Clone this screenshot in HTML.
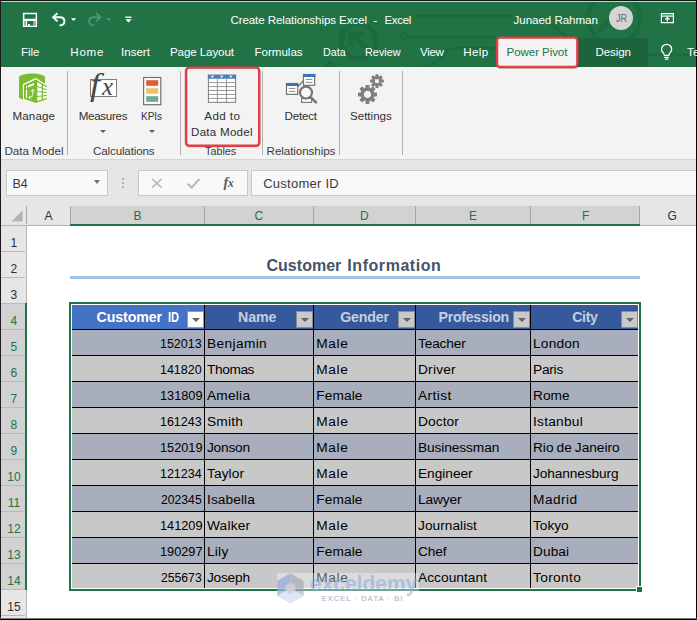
<!DOCTYPE html>
<html lang="en"><head><meta charset="utf-8"><title>Create Relationships Excel - Excel</title>
<style>
html,body{margin:0;padding:0;background:#fff;}
body{width:697px;height:620px;overflow:hidden;font-family:"Liberation Sans",sans-serif;}
#app{position:relative;width:697px;height:620px;overflow:hidden;background:#fff;}
#app div,#app span,#app svg{position:absolute;box-sizing:border-box;}
.t{white-space:pre;font-size:12px;transform-origin:0 0;z-index:5;}
.sep{width:1px;top:71px;height:84px;background:#b2b2b2;}
.hsep{width:1px;top:206px;height:18px;background:#a8a8a8;}
.rsep{left:1px;width:24px;height:1px;background:#b9b9b9;}
.vl{width:1px;top:305px;height:283px;background:#000;}
.hl{left:72px;width:566px;height:1px;background:#000;}
.fb{width:17px;height:17px;top:311px;border:1px solid #8c8c8c;background:#c9c9c9;}
.fb:after{content:"";position:absolute;left:3.6px;top:6px;border-left:4px solid transparent;border-right:4px solid transparent;border-top:4px solid #646464;}
.dd{width:0;height:0;border-left:3px solid transparent;border-right:3px solid transparent;border-top:3px solid #5e5e5e;}

</style></head>
<body>
<div id="app">
<!-- ============ title bar + tabs ============ -->
<div id="titlebar" style="left:0;top:0;width:697px;height:67px;background:#217346;"></div>
<svg id="deco" style="left:0;top:0" width="697" height="67" viewBox="0 0 697 67" fill="none" stroke="#1c6b3f" stroke-width="3">
  <path d="M414 16.5H512"/>
  <circle cx="404" cy="36.7" r="3"/>
  <path d="M407 36.7H496"/>
  <path d="M424 67 L438 61 L448 50.5 Q450 48.5 454 48.5 H496"/>
  <circle cx="358.4" cy="41" r="17.4" stroke-width="5"/>
  <path d="M368.5 49 L351 34 M350.5 46 V33.5 H363" stroke-width="4.5"/>
  <circle cx="330" cy="66" r="3"/>
  <circle cx="614" cy="18" r="26" stroke-width="4.5"/>
  <path d="M598 32 L620 10" stroke-width="5"/>
  <path d="M548 22 L590 55 H697" />
</svg>
<div id="designbg" style="left:578px;top:37.5px;width:70px;height:30px;background:#1d633b;"></div>
<svg id="pptab" style="z-index:3;left:490px;top:32px" width="96" height="42" viewBox="0 0 96 42">
  <rect x="7.6" y="6.1" width="80.2" height="29.4" rx="3" fill="none" stroke="rgba(0,30,0,0.25)" stroke-width="2.6"/>
  <rect x="7.1" y="5.6" width="80.2" height="29.4" rx="3" fill="#f3f3f3" stroke="#e23f46" stroke-width="2.3"/>
</svg>

<!-- quick access toolbar icons -->
<svg id="qat" style="left:0;top:0" width="140" height="36" viewBox="0 0 140 36" fill="none" stroke="#fff" stroke-width="1.5">
  <!-- save -->
  <path fill-rule="evenodd" fill="#fff" stroke="none" d="M22.9 12.8H37.1V27.1H22.9Z M24.4 14.2V18.8H35.6V14.2Z M27.1 20.9V25.8H33.6V20.9Z M24.5 20.9V25.8H25.5V20.9Z M34.5 20.9V25.8H35.5V20.9Z"/>
  <path d="M28.1 24H29.9V25.9H28.1Z" fill="#fff" stroke="none"/>
  <!-- undo -->
  <path d="M53.4 17.3H60.6A4.5 4.1 0 0 1 60.6 25.4H59.4" stroke-width="1.9"/>
  <path d="M57.4 13.2L53.1 17.3L57.4 21.4" stroke-width="1.9"/>
  <path d="M71 18.3H76.2L73.6 21.1Z" fill="#fff" stroke="none"/>
  <!-- redo (disabled) -->
  <g stroke="#4f9370">
  <path d="M100.2 17.3H93A4.5 4.1 0 0 0 93 25.4H94.2" stroke-width="1.9"/>
  <path d="M96.2 13.2L100.5 17.3L96.2 21.4" stroke-width="1.9"/>
  <path d="M106 18.3H111.2L108.6 21.1Z" fill="#4f9370" stroke="none"/>
  </g>
  <!-- customize -->
  <path d="M125.3 17.2H131.6" stroke-width="1.3"/>
  <path d="M125.3 19.3H131.7L128.5 22.6Z" fill="#fff" stroke="none"/>
</svg>

<!-- avatar -->
<div id="avatar" style="left:609px;top:6.3px;width:24px;height:24px;border-radius:12px;background:#d4d4d4;"></div>
<!-- ribbon display options -->
<svg id="rdo" style="left:658px;top:10px" width="20" height="18" viewBox="0 0 20 18" fill="none" stroke="#fff" stroke-width="1.2">
  <path d="M3.4 3.7H15.4V12.6H3.4Z"/><path d="M3.4 6.1H15.4"/>
  <path d="M9.4 11.6V7.6M7.3 9.5L9.4 7.5L11.5 9.5"/>
</svg>
<!-- light bulb -->
<svg id="bulb" style="left:658px;top:42px" width="18" height="20" viewBox="0 0 18 20" fill="none" stroke="#fff" stroke-width="1.3">
  <path d="M6.4 13.4C6.4 11.2 3.5 10 3.5 7.4A5.1 5.1 0 0 1 13.7 7.4C13.7 10 10.8 11.2 10.8 13.4Z"/>
  <path d="M6.3 15.3H10.9M6.9 17.2H10.3"/>
</svg>

<!-- ============ ribbon ============ -->
<div id="ribbon" style="left:0;top:67px;width:697px;height:93px;background:#f3f3f3;border-bottom:1px solid #d4d4d4;"></div>
<div class="sep" style="left:67px"></div>
<div class="sep" style="left:180px"></div>
<div class="sep" style="left:262px"></div>
<div class="sep" style="left:339px"></div>
<div class="sep" style="left:402px"></div>
<svg id="addbox" style="z-index:6;left:180px;top:62px" width="90" height="92" viewBox="0 0 90 92" fill="none">
  <rect x="6.4" y="6" width="73.2" height="78.2" rx="3.2" stroke="rgba(60,0,0,0.16)" stroke-width="2.6"/>
  <rect x="6" y="5.6" width="73.2" height="78.2" rx="3.2" stroke="#e23f46" stroke-width="2.4"/>
</svg>
<div class="dd" style="left:100.4px;top:130px"></div>
<div class="dd" style="left:148.6px;top:130px"></div>

<!-- Manage icon -->
<svg id="ic-manage" style="left:10px;top:68px" width="50" height="40" viewBox="0 0 50 40">
  <path d="M9 9.3A13 3.7 0 0 1 35 9.3V30L12.9 31.8 9 29.8Z" fill="#7dbb30"/>
  <path d="M25.8 10L37.1 16.9V31.6L25.8 35.7 12.9 31.9V16.1Z" fill="#fff"/>
  <path d="M14 16.9L25.8 11.5 36.9 18V31.2L25.8 35 14 31.1Z" fill="#7dbb30"/>
  <path d="M27.3 14.0 L31.7 16.5 L31.7 19.4 L27.3 17.9Z M27.3 19.0 L31.7 20.5 L31.7 23.4 L27.3 22.9Z M27.3 24.0 L31.7 24.5 L31.7 27.4 L27.3 27.9Z M27.3 29.0 L31.7 28.5 L31.7 31.4 L27.3 32.9Z M33.0 17.3 L36.9 19.5 L36.9 21.2 L33.0 19.9Z M33.0 21.0 L36.9 22.3 L36.9 24.0 L33.0 23.6Z M33.0 24.7 L36.9 25.1 L36.9 26.9 L33.0 27.3Z M33.0 28.4 L36.9 28.0 L36.9 29.7 L33.0 31.0Z" fill="#fff"/>
  <path d="M18.2 17.3L24 14.9V17L18.2 19.4Z" fill="#fff"/>
  <path d="M16.5 18V20.2M16.5 21.8V30" stroke="#fff" stroke-width="1.2"/>
  <path d="M22.8 21.6V26.4Q22.8 29.4 19 29.6M20.9 23.6L22.8 21.4 24.7 23.6M20.4 28.2L18.6 29.6 20.4 31" stroke="#fff" stroke-width="0.9" fill="none"/>
</svg>

<!-- Measures fx icon -->
<div id="ic-fxbox" style="left:90px;top:79px;width:27.4px;height:18px;border:1px solid #7d7d7d;background:#fff;"></div>

<!-- KPI icon -->
<svg id="ic-kpi" style="left:141px;top:75px" width="24" height="32" viewBox="0 0 24 32">
  <rect x="2.6" y="2.5" width="17.2" height="27.2" fill="#fdfdfd" stroke="#727272" stroke-width="1.2"/>
  <rect x="5.2" y="5.2" width="12" height="5.6" fill="#d9603b"/>
  <rect x="5.2" y="13.2" width="12" height="5.6" fill="#edc164"/>
  <rect x="5.2" y="21.2" width="12" height="5.6" fill="#6fa895"/>
</svg>

<!-- Add to Data Model table icon -->
<svg id="ic-table" style="left:206px;top:73px" width="32" height="32" viewBox="0 0 32 32">
  <rect x="2.4" y="2.2" width="27.2" height="27.1" fill="#fff" stroke="#7c7c7c" stroke-width="1"/>
  <rect x="1.9" y="1.7" width="28.2" height="4" fill="#467dba"/>
  <path d="M11.4 5.7V29.3M20.5 5.7V29.3M2.4 9.6H29.6M2.4 13.55H29.6M2.4 17.5H29.6M2.4 21.45H29.6M2.4 25.4H29.6" stroke="#8c8c8c" stroke-width="0.9" fill="none"/>
  <path d="M4.6 2.7H8.4L6.5 4.8ZM13.8 2.7H17.6L15.7 4.8ZM22.9 2.7H26.7L24.8 4.8Z" fill="#fff"/>
</svg>

<!-- Detect icon -->
<svg id="ic-detect" style="left:284px;top:72px" width="36" height="34" viewBox="0 0 36 34" fill="none">
  <path d="M14 14.5L20 8" stroke="#757575" stroke-width="1.2"/>
  <rect x="2.5" y="11.5" width="11.2" height="10.8" fill="#fff" stroke="#757575" stroke-width="1.2"/>
  <rect x="1.9" y="11" width="12.4" height="3" fill="#3d76b6"/>
  <path d="M4.8 16.4H11.4M4.8 19.4H11.4" stroke="#8a8a8a" stroke-width="1"/>
  <rect x="19.5" y="2.5" width="11.2" height="10.8" fill="#fff" stroke="#757575" stroke-width="1.2"/>
  <rect x="18.9" y="2" width="12.4" height="3" fill="#3d76b6"/>
  <path d="M21.8 7.4H28.4M21.8 10.4H28.4" stroke="#8a8a8a" stroke-width="1"/>
  <rect x="17.6" y="26.4" width="10" height="4" fill="#fff" stroke="#757575" stroke-width="1.1"/>
  <circle cx="22" cy="20.6" r="6" fill="#f8f8f8" stroke="#767676" stroke-width="2.2"/>
  <path d="M26.6 25.2L32 30.4" stroke="#767676" stroke-width="2.6" stroke-linecap="round"/>
</svg>

<!-- Settings gears -->
<svg id="ic-gear" style="left:352px;top:70px" width="36" height="36" viewBox="0 0 36 36" fill="#7f7f7f">
  <g transform="translate(15.5,24.4)">
    <circle r="5.3" fill="none" stroke="#7f7f7f" stroke-width="3.4"/>
    <g id="teeth1"><rect x="-2" y="-9.5" width="4" height="3.6" rx="0.7"/><rect x="-2" y="5.9" width="4" height="3.6" rx="0.7"/></g>
    <use href="#teeth1" transform="rotate(45)"/><use href="#teeth1" transform="rotate(90)"/><use href="#teeth1" transform="rotate(135)"/>
  </g>
  <g transform="translate(25,11.1)">
    <path fill-rule="evenodd" d="M-5 0A5 5 0 1 0 5 0A5 5 0 1 0 -5 0Z M-1.9 -1.9H1.9V1.9H-1.9Z"/>
    <g id="teeth2"><rect x="-1.5" y="-6.9" width="3" height="2.6" rx="0.5"/><rect x="-1.5" y="4.3" width="3" height="2.6" rx="0.5"/></g>
    <use href="#teeth2" transform="rotate(45)"/><use href="#teeth2" transform="rotate(90)"/><use href="#teeth2" transform="rotate(135)"/>
  </g>
</svg>

<!-- ============ formula bar ============ -->
<div id="fbar" style="left:0;top:160px;width:697px;height:46px;background:#e6e6e6;"></div>
<div id="namebox" style="left:6px;top:170px;width:102px;height:26px;background:#f9f9f9;border:1px solid #c8c8c8;"></div>
<div class="dd" style="left:94px;top:180.2px;border-left-width:3.5px;border-right-width:3.5px;border-top-width:4px;border-top-color:#707070"></div>
<svg style="left:121px;top:176px" width="5" height="14" viewBox="0 0 5 14" fill="#a2a2a2"><rect x="1.2" y="1.8" width="1.8" height="1.8"/><rect x="1.2" y="6.1" width="1.8" height="1.8"/><rect x="1.2" y="10.4" width="1.8" height="1.8"/></svg>
<div id="fbtns" style="left:138px;top:170px;width:110px;height:26px;background:#f9f9f9;border:1px solid #c8c8c8;"></div>
<svg style="left:150px;top:176px" width="90" height="14" viewBox="0 0 90 14" fill="none" stroke="#b9b9b9" stroke-width="1.3">
  <path d="M2 2.8L11.6 11.6M11.6 2.8L2 11.6" stroke-width="1.6"/>
  <path d="M37.6 7.8L41.6 11.6L49.4 3" stroke-width="2.1"/>
</svg>
<span class="t" style="left:223.5px;top:174.6px;font-size:14.5px;line-height:15px;font-family:'Liberation Serif',serif;font-style:italic;font-weight:700;color:#5c5c5c;letter-spacing:-0.3px;">f<span style="position:static;font-size:11.5px;">x</span></span>
<div id="finput" style="left:251px;top:170px;width:450px;height:26px;background:#f9f9f9;border:1px solid #c8c8c8;"></div>

<!-- ============ sheet headers ============ -->
<div id="colhdr" style="left:0;top:206px;width:697px;height:20px;background:#e6e6e6;border-bottom:1px solid #b4b4b4;"></div>
<div id="colsel" style="left:70px;top:206px;width:569.6px;height:20px;background:#d2d2d2;border-bottom:2px solid #217346;"></div>
<div class="hsep" style="left:26px"></div><div class="hsep" style="left:70px"></div><div class="hsep" style="left:204px"></div>
<div class="hsep" style="left:313px"></div><div class="hsep" style="left:415px"></div><div class="hsep" style="left:530px"></div><div class="hsep" style="left:639.4px"></div>
<svg style="left:10px;top:209px" width="14" height="14" viewBox="0 0 14 14"><path d="M12.6 1.2V12.6H1.4Z" fill="#b4b4b4"/></svg>

<div id="rowhdr" style="left:0;top:226px;width:27px;height:394px;background:#e6e6e6;border-right:1px solid #b4b4b4;"></div>
<div id="rowsel" style="left:0;top:303px;width:27px;height:287px;background:#d2d2d2;border-right:2px solid #217346;"></div>
<div class="rsep" style="top:251px"></div><div class="rsep" style="top:277px"></div><div class="rsep" style="top:303px"></div><div class="rsep" style="top:329px"></div><div class="rsep" style="top:355px"></div><div class="rsep" style="top:381px"></div><div class="rsep" style="top:407px"></div><div class="rsep" style="top:433px"></div><div class="rsep" style="top:459px"></div><div class="rsep" style="top:485px"></div><div class="rsep" style="top:511px"></div><div class="rsep" style="top:537px"></div><div class="rsep" style="top:563px"></div><div class="rsep" style="top:589px"></div><div class="rsep" style="top:615px"></div>

<!-- ============ sheet content ============ -->
<div id="uline" style="left:70px;top:276px;width:570px;height:2.5px;background:#9dc3e6;"></div>
<div id="selbox" style="left:69px;top:302px;width:572px;height:289px;border:2px solid #217346;"></div>
<div id="hdrB" style="left:72px;top:305px;width:132px;height:24px;background:#4472c4;"></div>
<div id="hdrR" style="left:205px;top:305px;width:433px;height:24px;background:#35599b;"></div>
<div style="left:72px;top:330px;width:566px;height:25px;background:#a8aebc;"></div><div style="left:72px;top:356px;width:566px;height:25px;background:#c8c8c8;"></div><div style="left:72px;top:382px;width:566px;height:25px;background:#a8aebc;"></div><div style="left:72px;top:408px;width:566px;height:25px;background:#c8c8c8;"></div><div style="left:72px;top:434px;width:566px;height:25px;background:#a8aebc;"></div><div style="left:72px;top:460px;width:566px;height:25px;background:#c8c8c8;"></div><div style="left:72px;top:486px;width:566px;height:25px;background:#a8aebc;"></div><div style="left:72px;top:512px;width:566px;height:25px;background:#c8c8c8;"></div><div style="left:72px;top:538px;width:566px;height:25px;background:#a8aebc;"></div><div style="left:72px;top:564px;width:566px;height:24px;background:#c8c8c8;"></div>
<div class="hl" style="top:329px"></div>
<div class="hl" style="top:355px"></div><div class="hl" style="top:381px"></div><div class="hl" style="top:407px"></div><div class="hl" style="top:433px"></div><div class="hl" style="top:459px"></div><div class="hl" style="top:485px"></div><div class="hl" style="top:511px"></div><div class="hl" style="top:537px"></div><div class="hl" style="top:563px"></div>
<div class="vl" style="left:204px"></div><div class="vl" style="left:313px"></div><div class="vl" style="left:415px"></div><div class="vl" style="left:530px"></div>
<div class="fb" style="left:187px;background:#fbfbfb;border-color:#9a9a9a"></div>
<div class="fb" style="left:296px"></div><div class="fb" style="left:398px"></div><div class="fb" style="left:513px"></div><div class="fb" style="left:621px"></div>
<div id="fillh" style="left:636px;top:586px;width:7px;height:7px;background:#217346;border:1px solid #fff;"></div>

<!-- watermark logo -->
<div id="wmbg" style="z-index:6;left:277px;top:573px;width:142px;height:31px;background:rgba(255,255,255,0.34);"></div>
<svg id="wm" style="z-index:7;left:270px;top:566px" width="44" height="44" viewBox="270 566 44 44">
  <path d="M277.2 581L290.4 573.2V588.4L277.2 596Z" fill="rgba(132,160,222,0.62)"/>
  <path d="M290.4 573.2L303.6 581V596L290.4 588.4Z" fill="rgba(150,156,168,0.55)"/>
  <path d="M277.2 596L290.4 588.4 303.6 596 290.4 603.6Z" fill="rgba(214,224,242,0.8)"/>
  <path d="M290.4 582.6L295.4 585.5V591.3L290.4 594.2 285.4 591.3V585.5Z" fill="rgba(205,208,216,0.85)"/>
</svg>

<!-- ============ window borders ============ -->
<div id="bl" style="left:0;top:0;width:1.2px;height:620px;background:#1c1c1c;"></div>
<div id="bt2" style="left:1px;top:1px;width:695px;height:1px;background:#c9d3cd;"></div>
<div id="bt" style="left:0;top:0;width:697px;height:1px;background:#111;"></div>
<div id="br" style="left:696px;top:0;width:1px;height:620px;background:#000;"></div>
<div id="bb" style="left:0;top:618px;width:697px;height:2px;background:#000;border-top:1px solid #777;"></div>

<span class="t" style="left:230.40px;top:14.00px;font-size:11.6px;line-height:11.6px;color:#fff;letter-spacing:-0.105px;">Create Relationships Excel</span>
<span class="t" style="left:373.30px;top:14.00px;font-size:11.6px;line-height:11.6px;color:#fff;transform:scaleX(1.1250);">-</span>
<span class="t" style="left:384.50px;top:14.00px;font-size:11.6px;line-height:11.6px;color:#fff;letter-spacing:-0.394px;">Excel</span>
<span class="t" style="left:513.50px;top:14.00px;font-size:11.6px;line-height:11.6px;color:#fff;letter-spacing:-0.053px;">Junaed Rahman</span>
<span class="t" style="left:615.80px;top:14.00px;font-size:10px;line-height:10px;color:#666;transform:scaleX(0.9000);">JR</span>
<span class="t" style="left:21.00px;top:46.00px;font-size:11.6px;line-height:11.6px;color:#fff;letter-spacing:-0.078px;">File</span>
<span class="t" style="left:70.30px;top:46.00px;font-size:11.6px;line-height:11.6px;color:#fff;letter-spacing:0.741px;">Home</span>
<span class="t" style="left:121.00px;top:46.00px;font-size:11.6px;line-height:11.6px;color:#fff;letter-spacing:-0.015px;">Insert</span>
<span class="t" style="left:170.00px;top:46.00px;font-size:11.6px;line-height:11.6px;color:#fff;letter-spacing:-0.109px;">Page Layout</span>
<span class="t" style="left:254.50px;top:46.00px;font-size:11.6px;line-height:11.6px;color:#fff;letter-spacing:-0.031px;">Formulas</span>
<span class="t" style="left:322.60px;top:46.00px;font-size:11.6px;line-height:11.6px;color:#fff;transform:scaleX(0.9225);">Data</span>
<span class="t" style="left:365.40px;top:46.00px;font-size:11.6px;line-height:11.6px;color:#fff;transform:scaleX(0.9368);">Review</span>
<span class="t" style="left:420.00px;top:46.00px;font-size:11.6px;line-height:11.6px;color:#fff;letter-spacing:-0.316px;">View</span>
<span class="t" style="left:463.30px;top:46.00px;font-size:11.6px;line-height:11.6px;color:#fff;letter-spacing:0.368px;">Help</span>
<span class="t" style="left:506.50px;top:46.00px;font-size:11.6px;line-height:11.6px;color:#217346;letter-spacing:-0.094px;">Power Pivot</span>
<span class="t" style="left:595.40px;top:46.00px;font-size:11.6px;line-height:11.6px;color:#fff;letter-spacing:-0.108px;">Design</span>
<span class="t" style="left:687.00px;top:46.00px;font-size:11.6px;line-height:11.6px;color:#fff;letter-spacing:0.288px;">Tell me</span>
<span class="t" style="left:12.40px;top:110.00px;font-size:11.6px;line-height:11.6px;color:#303030;letter-spacing:0.150px;">Manage</span>
<span class="t" style="left:78.70px;top:110.00px;font-size:11.6px;line-height:11.6px;color:#303030;letter-spacing:-0.301px;">Measures</span>
<span class="t" style="left:141.40px;top:110.00px;font-size:11.6px;line-height:11.6px;color:#303030;transform:scaleX(0.8628);">KPIs</span>
<span class="t" style="left:204.30px;top:110.00px;font-size:11.6px;line-height:11.6px;color:#303030;letter-spacing:0.406px;">Add to</span>
<span class="t" style="left:191.00px;top:126.00px;font-size:11.6px;line-height:11.6px;color:#303030;letter-spacing:0.254px;">Data Model</span>
<span class="t" style="left:284.50px;top:110.00px;font-size:11.6px;line-height:11.6px;color:#303030;letter-spacing:-0.197px;">Detect</span>
<span class="t" style="left:350.00px;top:110.00px;font-size:11.6px;line-height:11.6px;color:#303030;letter-spacing:-0.014px;">Settings</span>
<span class="t" style="left:4.40px;top:145.00px;font-size:11.6px;line-height:11.6px;color:#3a3a3a;letter-spacing:-0.012px;">Data Model</span>
<span class="t" style="left:93.00px;top:145.00px;font-size:11.6px;line-height:11.6px;color:#3a3a3a;letter-spacing:-0.142px;">Calculations</span>
<span class="t" style="left:205.00px;top:145.00px;font-size:11.6px;line-height:11.6px;color:#3a3a3a;transform:scaleX(0.9313);">Tables</span>
<span class="t" style="left:266.60px;top:145.00px;font-size:11.6px;line-height:11.6px;color:#3a3a3a;letter-spacing:-0.075px;">Relationships</span>
<span class="t" style="left:90.00px;top:69.00px;font-size:31px;line-height:31px;color:#484848;transform:scaleX(1.1615);font-family:'Liberation Serif', serif;font-style:italic;">f</span>
<span class="t" style="left:101.55px;top:74.00px;font-size:26px;line-height:26px;color:#484848;transform:scaleX(0.9538);font-family:'Liberation Serif', serif;font-style:italic;">x</span>
<span class="t" style="left:12.60px;top:178.00px;font-size:12.5px;line-height:12.5px;color:#3a3a3a;letter-spacing:-0.237px;">B4</span>
<span class="t" style="left:263.20px;top:177.00px;font-size:13px;line-height:13px;color:#3a3a3a;letter-spacing:0.253px;">Customer ID</span>
<span class="t" style="left:44.50px;top:210.00px;font-size:12px;line-height:12px;color:#303030;">A</span>
<span class="t" style="left:133.50px;top:210.00px;font-size:12px;line-height:12px;color:#217346;">B</span>
<span class="t" style="left:254.50px;top:210.00px;font-size:12px;line-height:12px;color:#217346;">C</span>
<span class="t" style="left:360.00px;top:210.00px;font-size:12px;line-height:12px;color:#217346;">D</span>
<span class="t" style="left:469.00px;top:210.00px;font-size:12px;line-height:12px;color:#217346;">E</span>
<span class="t" style="left:582.00px;top:210.00px;font-size:12px;line-height:12px;color:#217346;">F</span>
<span class="t" style="left:667.50px;top:210.00px;font-size:12px;line-height:12px;color:#303030;">G</span>
<span class="t" style="left:10.60px;top:237.00px;font-size:12px;line-height:12px;color:#303030;">1</span>
<span class="t" style="left:10.60px;top:263.00px;font-size:12px;line-height:12px;color:#303030;">2</span>
<span class="t" style="left:10.60px;top:289.00px;font-size:12px;line-height:12px;color:#303030;">3</span>
<span class="t" style="left:10.60px;top:315.00px;font-size:12px;line-height:12px;color:#217346;">4</span>
<span class="t" style="left:10.60px;top:341.00px;font-size:12px;line-height:12px;color:#217346;">5</span>
<span class="t" style="left:10.60px;top:367.00px;font-size:12px;line-height:12px;color:#217346;">6</span>
<span class="t" style="left:10.60px;top:393.00px;font-size:12px;line-height:12px;color:#217346;">7</span>
<span class="t" style="left:10.60px;top:419.00px;font-size:12px;line-height:12px;color:#217346;">8</span>
<span class="t" style="left:10.60px;top:445.00px;font-size:12px;line-height:12px;color:#217346;">9</span>
<span class="t" style="left:7.26px;top:471.00px;font-size:12px;line-height:12px;color:#217346;">10</span>
<span class="t" style="left:7.71px;top:497.00px;font-size:12px;line-height:12px;color:#217346;">11</span>
<span class="t" style="left:7.26px;top:523.00px;font-size:12px;line-height:12px;color:#217346;">12</span>
<span class="t" style="left:7.26px;top:549.00px;font-size:12px;line-height:12px;color:#217346;">13</span>
<span class="t" style="left:7.26px;top:575.00px;font-size:12px;line-height:12px;color:#217346;">14</span>
<span class="t" style="left:7.26px;top:601.00px;font-size:12px;line-height:12px;color:#303030;">15</span>
<span class="t" style="left:266.50px;top:258.00px;font-size:16px;line-height:16px;color:#44546a;letter-spacing:0.021px;font-weight:700;">Customer</span>
<span class="t" style="left:347.30px;top:258.00px;font-size:16px;line-height:16px;color:#44546a;letter-spacing:0.558px;font-weight:700;">Information</span>
<span class="t" style="left:96.50px;top:310.00px;font-size:14.2px;line-height:14.2px;color:#fff;letter-spacing:-0.100px;font-weight:700;">Customer</span>
<span class="t" style="left:167.80px;top:310.00px;font-size:14.2px;line-height:14.2px;color:#fff;transform:scaleX(0.7747);font-weight:700;">ID</span>
<span class="t" style="left:238.00px;top:310.00px;font-size:14.2px;line-height:14.2px;color:#c6cee0;letter-spacing:-0.050px;font-weight:700;">Name</span>
<span class="t" style="left:340.20px;top:310.00px;font-size:14.2px;line-height:14.2px;color:#c6cee0;letter-spacing:-0.170px;font-weight:700;">Gender</span>
<span class="t" style="left:438.60px;top:310.00px;font-size:14.2px;line-height:14.2px;color:#c6cee0;letter-spacing:-0.306px;font-weight:700;">Profession</span>
<span class="t" style="left:572.20px;top:310.00px;font-size:14.2px;line-height:14.2px;color:#c6cee0;letter-spacing:-0.371px;font-weight:700;">City</span>
<span class="t" style="left:160.09px;top:337.00px;font-size:13.7px;line-height:13.7px;color:#000;transform:scaleX(0.9099);">152013</span>
<span class="t" style="left:207.00px;top:337.00px;font-size:13.7px;line-height:13.7px;color:#000;letter-spacing:0.379px;word-spacing:-0.7px;">Benjamin</span>
<span class="t" style="left:316.30px;top:337.00px;font-size:13.7px;line-height:13.7px;color:#000;letter-spacing:0.648px;word-spacing:-0.7px;">Male</span>
<span class="t" style="left:418.00px;top:337.00px;font-size:13.7px;line-height:13.7px;color:#000;letter-spacing:-0.156px;word-spacing:-0.7px;">Teacher</span>
<span class="t" style="left:533.00px;top:337.00px;font-size:13.7px;line-height:13.7px;color:#000;letter-spacing:0.208px;word-spacing:-0.7px;">London</span>
<span class="t" style="left:160.09px;top:363.00px;font-size:13.7px;line-height:13.7px;color:#000;transform:scaleX(0.9099);">141820</span>
<span class="t" style="left:207.00px;top:363.00px;font-size:13.7px;line-height:13.7px;color:#000;letter-spacing:-0.400px;word-spacing:-0.7px;">Thomas</span>
<span class="t" style="left:316.30px;top:363.00px;font-size:13.7px;line-height:13.7px;color:#000;letter-spacing:0.648px;word-spacing:-0.7px;">Male</span>
<span class="t" style="left:418.00px;top:363.00px;font-size:13.7px;line-height:13.7px;color:#000;letter-spacing:0.232px;word-spacing:-0.7px;">Driver</span>
<span class="t" style="left:533.00px;top:363.00px;font-size:13.7px;line-height:13.7px;color:#000;letter-spacing:-0.235px;word-spacing:-0.7px;">Paris</span>
<span class="t" style="left:160.07px;top:389.00px;font-size:13.7px;line-height:13.7px;color:#000;transform:scaleX(0.9305);">131809</span>
<span class="t" style="left:207.00px;top:389.00px;font-size:13.7px;line-height:13.7px;color:#000;letter-spacing:0.235px;word-spacing:-0.7px;">Amelia</span>
<span class="t" style="left:316.30px;top:389.00px;font-size:13.7px;line-height:13.7px;color:#000;letter-spacing:0.094px;word-spacing:-0.7px;">Female</span>
<span class="t" style="left:418.00px;top:389.00px;font-size:13.7px;line-height:13.7px;color:#000;letter-spacing:0.445px;word-spacing:-0.7px;">Artist</span>
<span class="t" style="left:533.00px;top:389.00px;font-size:13.7px;line-height:13.7px;color:#000;letter-spacing:0.034px;word-spacing:-0.7px;">Rome</span>
<span class="t" style="left:160.09px;top:415.00px;font-size:13.7px;line-height:13.7px;color:#000;transform:scaleX(0.9099);">161243</span>
<span class="t" style="left:207.00px;top:415.00px;font-size:13.7px;line-height:13.7px;color:#000;letter-spacing:0.206px;word-spacing:-0.7px;">Smith</span>
<span class="t" style="left:316.30px;top:415.00px;font-size:13.7px;line-height:13.7px;color:#000;letter-spacing:0.648px;word-spacing:-0.7px;">Male</span>
<span class="t" style="left:418.00px;top:415.00px;font-size:13.7px;line-height:13.7px;color:#000;letter-spacing:0.109px;word-spacing:-0.7px;">Doctor</span>
<span class="t" style="left:533.00px;top:415.00px;font-size:13.7px;line-height:13.7px;color:#000;letter-spacing:0.257px;word-spacing:-0.7px;">Istanbul</span>
<span class="t" style="left:160.07px;top:441.00px;font-size:13.7px;line-height:13.7px;color:#000;transform:scaleX(0.9305);">152019</span>
<span class="t" style="left:207.00px;top:441.00px;font-size:13.7px;line-height:13.7px;color:#000;letter-spacing:-0.225px;word-spacing:-0.7px;">Jonson</span>
<span class="t" style="left:316.30px;top:441.00px;font-size:13.7px;line-height:13.7px;color:#000;letter-spacing:0.648px;word-spacing:-0.7px;">Male</span>
<span class="t" style="left:418.00px;top:441.00px;font-size:13.7px;line-height:13.7px;color:#000;letter-spacing:-0.085px;word-spacing:-0.7px;">Businessman</span>
<span class="t" style="left:533.00px;top:441.00px;font-size:13.7px;line-height:13.7px;color:#000;letter-spacing:-0.019px;word-spacing:-0.7px;">Rio de Janeiro</span>
<span class="t" style="left:160.09px;top:467.00px;font-size:13.7px;line-height:13.7px;color:#000;transform:scaleX(0.9099);">121234</span>
<span class="t" style="left:207.00px;top:467.00px;font-size:13.7px;line-height:13.7px;color:#000;letter-spacing:0.090px;word-spacing:-0.7px;">Taylor</span>
<span class="t" style="left:316.30px;top:467.00px;font-size:13.7px;line-height:13.7px;color:#000;letter-spacing:0.648px;word-spacing:-0.7px;">Male</span>
<span class="t" style="left:418.00px;top:467.00px;font-size:13.7px;line-height:13.7px;color:#000;letter-spacing:-0.019px;word-spacing:-0.7px;">Engineer</span>
<span class="t" style="left:533.00px;top:467.00px;font-size:13.7px;line-height:13.7px;color:#000;letter-spacing:-0.104px;word-spacing:-0.7px;">Johannesburg</span>
<span class="t" style="left:161.00px;top:493.00px;font-size:13.7px;line-height:13.7px;color:#000;transform:scaleX(0.8901);">202345</span>
<span class="t" style="left:207.00px;top:493.00px;font-size:13.7px;line-height:13.7px;color:#000;letter-spacing:0.091px;word-spacing:-0.7px;">Isabella</span>
<span class="t" style="left:316.30px;top:493.00px;font-size:13.7px;line-height:13.7px;color:#000;letter-spacing:0.094px;word-spacing:-0.7px;">Female</span>
<span class="t" style="left:418.00px;top:493.00px;font-size:13.7px;line-height:13.7px;color:#000;letter-spacing:-0.113px;word-spacing:-0.7px;">Lawyer</span>
<span class="t" style="left:533.00px;top:493.00px;font-size:13.7px;line-height:13.7px;color:#000;letter-spacing:0.475px;word-spacing:-0.7px;">Madrid</span>
<span class="t" style="left:160.07px;top:519.00px;font-size:13.7px;line-height:13.7px;color:#000;transform:scaleX(0.9305);">141209</span>
<span class="t" style="left:207.00px;top:519.00px;font-size:13.7px;line-height:13.7px;color:#000;letter-spacing:0.196px;word-spacing:-0.7px;">Walker</span>
<span class="t" style="left:316.30px;top:519.00px;font-size:13.7px;line-height:13.7px;color:#000;letter-spacing:0.648px;word-spacing:-0.7px;">Male</span>
<span class="t" style="left:418.00px;top:519.00px;font-size:13.7px;line-height:13.7px;color:#000;letter-spacing:0.036px;word-spacing:-0.7px;">Journalist</span>
<span class="t" style="left:533.00px;top:519.00px;font-size:13.7px;line-height:13.7px;color:#000;letter-spacing:-0.011px;word-spacing:-0.7px;">Tokyo</span>
<span class="t" style="left:160.07px;top:545.00px;font-size:13.7px;line-height:13.7px;color:#000;transform:scaleX(0.9305);">190297</span>
<span class="t" style="left:207.00px;top:545.00px;font-size:13.7px;line-height:13.7px;color:#000;letter-spacing:0.235px;word-spacing:-0.7px;">Lily</span>
<span class="t" style="left:316.30px;top:545.00px;font-size:13.7px;line-height:13.7px;color:#000;letter-spacing:0.094px;word-spacing:-0.7px;">Female</span>
<span class="t" style="left:418.00px;top:545.00px;font-size:13.7px;line-height:13.7px;color:#000;letter-spacing:-0.136px;word-spacing:-0.7px;">Chef</span>
<span class="t" style="left:533.00px;top:545.00px;font-size:13.7px;line-height:13.7px;color:#000;letter-spacing:0.070px;word-spacing:-0.7px;">Dubai</span>
<span class="t" style="left:161.00px;top:571.00px;font-size:13.7px;line-height:13.7px;color:#000;transform:scaleX(0.8901);">255673</span>
<span class="t" style="left:207.00px;top:571.00px;font-size:13.7px;line-height:13.7px;color:#000;letter-spacing:-0.225px;word-spacing:-0.7px;">Joseph</span>
<span class="t" style="left:316.30px;top:571.00px;font-size:13.7px;line-height:13.7px;color:#000;letter-spacing:0.648px;word-spacing:-0.7px;">Male</span>
<span class="t" style="left:418.00px;top:571.00px;font-size:13.7px;line-height:13.7px;color:#000;letter-spacing:0.058px;word-spacing:-0.7px;">Accountant</span>
<span class="t" style="left:533.00px;top:571.00px;font-size:13.7px;line-height:13.7px;color:#000;letter-spacing:0.360px;word-spacing:-0.7px;">Toronto</span>
<span class="t" style="left:309.60px;top:573.00px;font-size:22px;line-height:22px;color:rgba(125,165,225,0.5);transform:scaleX(0.9524);z-index:8;font-weight:700;">exceldemy</span>
<span class="t" style="left:321.40px;top:595.00px;font-size:7.8px;line-height:7.8px;color:rgba(150,165,185,0.65);letter-spacing:0.839px;z-index:8;font-weight:700;">EXCEL · DATA · BI</span>
</div>
</body></html>
